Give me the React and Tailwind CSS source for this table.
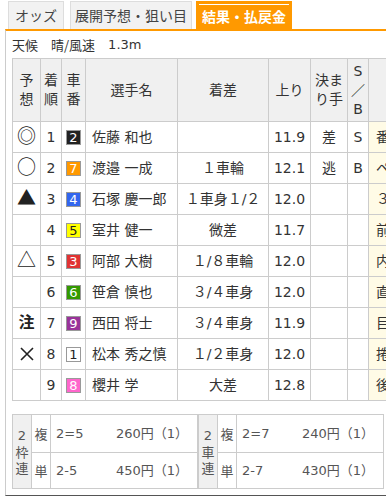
import React from 'react';

const badge = {
  1: 'bg-white text-[#222]',
  2: 'bg-[#222] text-white',
  3: 'bg-[#e03333] text-white',
  4: 'bg-[#3366ee] text-white',
  5: 'bg-[#ffff00] text-[#222]',
  6: 'bg-[#339900] text-white',
  7: 'bg-[#ff9900] text-white',
  8: 'bg-[#ff66cc] text-white',
  9: 'bg-[#993399] text-white',
};

const rows = [
  { mark: '◎', pos: 1, car: 2, name: '佐藤 和也', diff: '', up: '11.9', kimari: '差', sb: 'S', note: '番手から' },
  { mark: '○', pos: 2, car: 7, name: '渡邉 一成', diff: '１車輪', up: '12.1', kimari: '逃', sb: 'B', note: 'ペース' },
  { mark: '▲', pos: 3, car: 4, name: '石塚 慶一郎', diff: '１車身１/２', up: '12.0', kimari: '', sb: '', note: '３番手' },
  { mark: '', pos: 4, car: 5, name: '室井 健一', diff: '微差', up: '11.7', kimari: '', sb: '', note: '前受け' },
  { mark: '△', pos: 5, car: 3, name: '阿部 大樹', diff: '１/８車輪', up: '12.0', kimari: '', sb: '', note: '内から' },
  { mark: '', pos: 6, car: 6, name: '笹倉 慎也', diff: '３/４車身', up: '12.0', kimari: '', sb: '', note: '直線' },
  { mark: '注', pos: 7, car: 9, name: '西田 将士', diff: '３/４車身', up: '11.9', kimari: '', sb: '', note: '目標' },
  { mark: '×', pos: 8, car: 1, name: '松本 秀之慎', diff: '１/２車身', up: '12.0', kimari: '', sb: '', note: '捲り' },
  { mark: '', pos: 9, car: 8, name: '櫻井 学', diff: '大差', up: '12.8', kimari: '', sb: '', note: '後方' },
];

function Mark({ m }) {
  if (m === '×') {
    return (
      <svg width="14" height="14" viewBox="0 0 14 14" className="mx-auto block">
        <path d="M1 1 L13 13 M13 1 L1 13" stroke="#222" strokeWidth="1.6" fill="none" />
      </svg>
    );
  }
  if (m === '注') {
    return <span className="font-bold text-[16px] text-[#222]">注</span>;
  }
  return <span className="text-[19px] leading-none text-[#222] font-['Noto_Sans_CJK_JP',sans-serif]">{m}</span>;
}

const td = 'border border-[#cccccc] h-[31px] p-0 align-middle';
const th = 'border border-[#cccccc] bg-[#f0f0f0] font-normal p-0 align-middle text-center leading-[19px]';

function Payout({ label1, label2, a, b }) {
  return (
    <table className="border-collapse table-fixed w-[186px] text-[13px] text-[#555]">
      <colgroup>
        <col className="w-[19px]" />
        <col className="w-[19px]" />
        <col />
      </colgroup>
      <tbody>
        <tr>
          <td rowSpan={2} className="border border-[#cccccc] bg-[#f0f0f0] text-center p-0">
            <div className="flex flex-col items-center leading-[16px]">
              <span>{label1}</span>
              <span className="font-['Noto_Sans_CJK_JP',sans-serif]">{label2}</span>
              <span className="font-['Noto_Sans_CJK_JP',sans-serif]">連</span>
            </div>
          </td>
          <td className="border border-[#cccccc] h-[38px] text-center p-0 font-['Noto_Sans_CJK_JP',sans-serif]">複</td>
          <td className="border border-[#cccccc] h-[38px] px-[5px]">
            <div className="flex justify-between pr-[4px]">
              <span>{a[0]}</span>
              <span>{a[1]}（1）</span>
            </div>
          </td>
        </tr>
        <tr>
          <td className="border border-[#cccccc] h-[36px] text-center p-0 font-['Noto_Sans_CJK_JP',sans-serif]">単</td>
          <td className="border border-[#cccccc] h-[36px] px-[5px]">
            <div className="flex justify-between pr-[4px]">
              <span>{b[0]}</span>
              <span>{b[1]}（1）</span>
            </div>
          </td>
        </tr>
      </tbody>
    </table>
  );
}

export default function App() {
  return (
    <div className="w-[386px] h-[497px] overflow-hidden bg-white text-[#333] font-['DejaVu_Sans','Noto_Sans_CJK_JP',sans-serif]">
      {/* tabs */}
      <div className="flex items-end pl-[8px] pt-[1px] h-[29px] font-['Noto_Sans_CJK_JP',sans-serif] text-[14px]">
        <div className="h-[28px] w-[56px] border border-b-0 border-[#dddddd] bg-[#f2f2f2] text-[#444] flex items-center justify-center">
          オッズ
        </div>
        <div className="ml-[6px] h-[28px] w-[122px] border border-b-0 border-[#dddddd] bg-[#f2f2f2] text-[#444] flex items-center justify-center">
          展開予想・狙い目
        </div>
        <div className="ml-[4px] h-[28px] w-[96px] bg-[#ff9900] px-[3px] pt-[3px]">
          <div className="h-full border-t border-white text-white font-bold flex items-center justify-center pb-[2px]">
            結果・払戻金
          </div>
        </div>
      </div>
      {/* panel */}
      <div className="ml-[5px] h-[467px] border-t-2 border-t-[#ff9900] border-l border-l-[#cccccc] border-b border-b-[#555555] pl-[6px] overflow-hidden">
        <div className="h-[27px] flex items-center text-[13px] text-[#333]">
          <span className="font-['Noto_Sans_CJK_JP',sans-serif]">天候　晴/風速　</span>
          <span>1.3m</span>
        </div>
        <table className="border-collapse table-fixed w-[420px] text-[14px] text-[#333]">
          <colgroup>
            <col className="w-[28px]" />
            <col className="w-[21px]" />
            <col className="w-[24px]" />
            <col className="w-[92px]" />
            <col className="w-[91px]" />
            <col className="w-[42px]" />
            <col className="w-[37px]" />
            <col className="w-[21px]" />
            <col className="w-[64px]" />
          </colgroup>
          <thead>
            <tr className="h-[63px]">
              <th className={th}>予<br />想</th>
              <th className={th}>着<br />順</th>
              <th className={th}>車<br />番</th>
              <th className={th}>選手名</th>
              <th className={th}>着差</th>
              <th className={th}>上り</th>
              <th className={th}>決ま<br />り手</th>
              <th className={th}>S<br />／<br />B</th>
              <th className={th}></th>
            </tr>
          </thead>
          <tbody>
            {rows.map((r) => (
              <tr key={r.pos}>
                <td className={td + ' text-center'}>
                  <Mark m={r.mark} />
                </td>
                <td className={td + ' text-center'}>{r.pos}</td>
                <td className={td}>
                  <div
                    className={
                      'mx-auto w-[15px] h-[15px] border border-[#999999] flex items-center justify-center text-[13px] leading-none ' +
                      badge[r.car]
                    }
                  >
                    {r.car}
                  </div>
                </td>
                <td className={td + ' pl-[6px] whitespace-nowrap'}>{r.name}</td>
                <td className={td + ' text-center whitespace-nowrap'}>{r.diff}</td>
                <td className={td + ' text-center'}>{r.up}</td>
                <td className={td + ' text-center'}>{r.kimari}</td>
                <td className={td + ' text-center'}>{r.sb}</td>
                <td className={td + ' bg-[#fffbe6] pl-[7px] whitespace-nowrap overflow-hidden'}>{r.note}</td>
              </tr>
            ))}
          </tbody>
        </table>
        <div className="flex mt-[13px]">
          <Payout label1="2" label2="枠" a={['2=5', '260円']} b={['2-5', '450円']} />
          <Payout label1="2" label2="車" a={['2=7', '240円']} b={['2-7', '430円']} />
        </div>
      </div>
    </div>
  );
}
